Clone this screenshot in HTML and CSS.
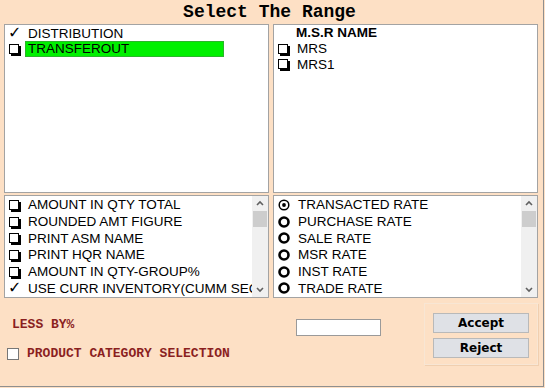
FILE: index.html
```html
<!DOCTYPE html>
<html lang="en">
<head>
    <meta charset="UTF-8">
    <meta name="viewport" content="width=device-width, initial-scale=1.0">
    <title>Select The Range</title>
    <link rel="stylesheet" href="styles.css">
</head>
<body>

<div class="window">
    <h1 class="title">Select The Range</h1>

    <div class="panels">
        <!-- Type list -->
        <div class="panel">
            <div class="row"><span class="tick">&#10003;</span><span>DISTRIBUTION</span></div>
            <div class="row"><span class="box"></span><span class="highlight">TRANSFEROUT</span></div>
        </div>

        <!-- MSR list -->
        <div class="panel msr">
            <div class="row head"><span class="spacer"></span><span>M.S.R NAME</span></div>
            <div class="row"><span class="box"></span><span>MRS</span></div>
            <div class="row"><span class="box"></span><span>MRS1</span></div>
        </div>

        <!-- Options list -->
        <div class="panel scroll-panel">
            <div class="items">
                <div class="row"><span class="box"></span><span>AMOUNT IN QTY TOTAL</span></div>
                <div class="row"><span class="box"></span><span>ROUNDED AMT FIGURE</span></div>
                <div class="row"><span class="box"></span><span>PRINT ASM NAME</span></div>
                <div class="row"><span class="box"></span><span>PRINT HQR NAME</span></div>
                <div class="row"><span class="box"></span><span>AMOUNT IN QTY-GROUP%</span></div>
                <div class="row"><span class="tick">&#10003;</span><span class="clip">USE CURR INVENTORY(CUMM SEC</span></div>
            </div>
            <div class="scrollbar">
                <svg class="arrow" viewBox="0 0 16 15"><path d="M5 9 L8 6 L11 9" fill="none" stroke="#606060" stroke-width="1.6"/></svg>
                <span class="thumb"></span>
                <span class="track"></span>
                <svg class="arrow" viewBox="0 0 16 15"><path d="M5 6 L8 9 L11 6" fill="none" stroke="#606060" stroke-width="1.6"/></svg>
            </div>
        </div>

        <!-- Rate list -->
        <div class="panel scroll-panel">
            <div class="items">
                <div class="row"><svg class="radio" viewBox="0 0 12 12"><circle cx="6" cy="6" r="4.8" fill="none" stroke="#000" stroke-width="1.5"/><circle cx="6" cy="6" r="1.9"/></svg><span>TRANSACTED RATE</span></div>
                <div class="row"><svg class="radio" viewBox="0 0 12 12"><circle cx="6" cy="6" r="4.5" fill="none" stroke="#000" stroke-width="2.6"/></svg><span>PURCHASE RATE</span></div>
                <div class="row"><svg class="radio" viewBox="0 0 12 12"><circle cx="6" cy="6" r="4.5" fill="none" stroke="#000" stroke-width="2.6"/></svg><span>SALE RATE</span></div>
                <div class="row"><svg class="radio" viewBox="0 0 12 12"><circle cx="6" cy="6" r="4.5" fill="none" stroke="#000" stroke-width="2.6"/></svg><span>MSR RATE</span></div>
                <div class="row"><svg class="radio" viewBox="0 0 12 12"><circle cx="6" cy="6" r="4.5" fill="none" stroke="#000" stroke-width="2.6"/></svg><span>INST RATE</span></div>
                <div class="row"><svg class="radio" viewBox="0 0 12 12"><circle cx="6" cy="6" r="4.5" fill="none" stroke="#000" stroke-width="2.6"/></svg><span>TRADE RATE</span></div>
            </div>
            <div class="scrollbar">
                <svg class="arrow" viewBox="0 0 16 15"><path d="M5 9 L8 6 L11 9" fill="none" stroke="#606060" stroke-width="1.6"/></svg>
                <span class="thumb"></span>
                <span class="track"></span>
                <svg class="arrow" viewBox="0 0 16 15"><path d="M5 6 L8 9 L11 6" fill="none" stroke="#606060" stroke-width="1.6"/></svg>
            </div>
        </div>
    </div>

    <div class="footer">
        <div class="labels">
            <div class="label">LESS BY%</div>
            <label class="check-row"><span class="plain-box"></span><span class="label">PRODUCT CATEGORY SELECTION</span></label>
        </div>
        <input type="text" class="less-input">
        <div class="actions">
            <button class="btn">Accept</button>
            <button class="btn">Reject</button>
        </div>
    </div>
</div>

</body>
</html>
```

FILE: styles.css
```css
/* General Reset */
* {
    margin: 0;
    padding: 0;
    box-sizing: border-box;
}

body {
    background: #fde0c5;
    font-family: "Liberation Sans", Arial, sans-serif;
    color: #000;
}

/* Window */
.window {
    width: 544px;
    height: 387px;
    border-right: 1px solid #8f8f8f;
    border-bottom: 1px solid #8f8f8f;
    display: flex;
    flex-direction: column;
}

.title {
    font-family: "Liberation Mono", "Courier New", monospace;
    font-size: 18px;
    font-weight: bold;
    text-align: center;
    height: 24px;
    line-height: 25px;
    padding-right: 4px;
}

/* Panels */
.panels {
    display: grid;
    grid-template-columns: 265px 265px;
    grid-template-rows: 169px 103px;
    column-gap: 4px;
    row-gap: 2px;
    padding-left: 4px;
}

.panel {
    background: #fff;
    border: 1px solid #a3a3a3;
    padding: 0 0 0 2px;
    overflow: hidden;
}

.row {
    display: flex;
    align-items: center;
    height: 16px;
    font-size: 13.5px;
    white-space: nowrap;
}

.msr .row {
    height: 15.7px;
}

.head {
    font-weight: bold;
}

.spacer {
    width: 20px;
    flex: none;
}

.tick {
    width: 21px;
    flex: none;
    font-family: "DejaVu Sans", sans-serif;
    font-size: 16px;
    font-weight: bold;
    line-height: 16px;
    padding-left: 1px;
}

.box {
    width: 10px;
    height: 10px;
    flex: none;
    margin: 0 9px 0 2px;
    border: 1px solid #000;
    box-shadow: 2px 2px 0 #000;
    background: #fff;
}

.highlight {
    background: #00f000;
    border: 1px solid #2bb52b;
    width: 199px;
    height: 16px;
    line-height: 14px;
    margin-left: -3px;
    padding-left: 2px;
}

.radio {
    width: 12px;
    height: 12px;
    flex: none;
    margin: 0 8px 0 2px;
}

/* Scrolling lists */
.scroll-panel {
    display: flex;
}

.items {
    flex: 1;
    overflow: hidden;
    padding-top: 0.5px;
}

.items .row {
    height: 16.7px;
}

.clip {
    overflow: hidden;
}

.scrollbar {
    width: 16px;
    flex: none;
    display: flex;
    flex-direction: column;
    background: #f0f0f0;
}

.arrow {
    width: 16px;
    height: 15px;
    flex: none;
}

.thumb {
    height: 16px;
    margin: 0 1px;
    background: #cdcdcd;
}

.track {
    flex: 1;
}

/* Footer */
.footer {
    display: flex;
    align-items: flex-start;
    padding-left: 7px;
    flex: 1;
}

.labels {
    width: 289px;
    flex: none;
    padding-top: 20px;
}

.label {
    font-family: "Liberation Mono", "Courier New", monospace;
    font-size: 13px;
    font-weight: bold;
    color: #8b1f1f;
    height: 14px;
    line-height: 14px;
    padding-left: 5px;
}

.check-row {
    display: flex;
    align-items: center;
    margin-top: 15px;
}

.check-row .label {
    padding-left: 8px;
}

.plain-box {
    width: 12px;
    height: 12px;
    background: #fff;
    border: 1px solid #777;
}

.less-input {
    width: 85px;
    height: 17px;
    margin-top: 21px;
    border: 1px solid #9a9a9a;
    background: #fff;
    outline: none;
}

/* Buttons */
.actions {
    margin: 5px 0 0 43px;
    width: 114px;
    height: 62px;
    border: 1px solid #f8e6d4;
    box-shadow: 1px 1px 0 #f0cfb0;
    display: flex;
    flex-direction: column;
    gap: 5px;
    padding: 9px 0 0 8px;
}

.btn {
    width: 96px;
    height: 20px;
    background: #dfe1e6;
    border: 1px solid #b9b9b9;
    font-family: "DejaVu Sans", Tahoma, sans-serif;
    font-size: 12px;
    font-weight: bold;
    color: #000;
}
```
